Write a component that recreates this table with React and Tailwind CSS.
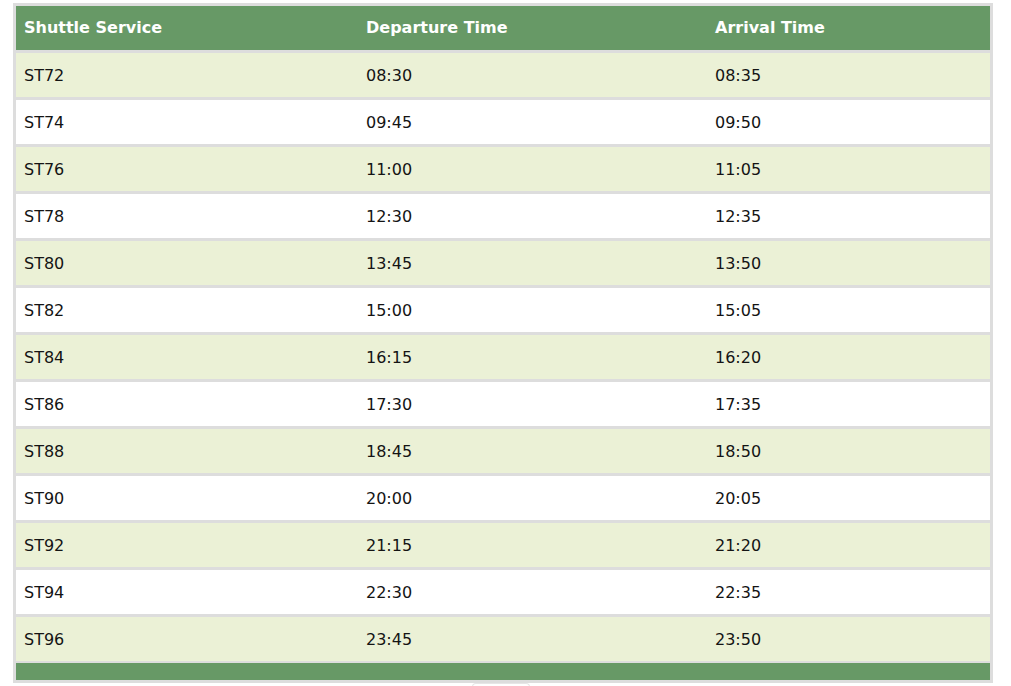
const rows = [
  ["ST72", "08:30", "08:35"],
  ["ST74", "09:45", "09:50"],
  ["ST76", "11:00", "11:05"],
  ["ST78", "12:30", "12:35"],
  ["ST80", "13:45", "13:50"],
  ["ST82", "15:00", "15:05"],
  ["ST84", "16:15", "16:20"],
  ["ST86", "17:30", "17:35"],
  ["ST88", "18:45", "18:50"],
  ["ST90", "20:00", "20:05"],
  ["ST92", "21:15", "21:20"],
  ["ST94", "22:30", "22:35"],
  ["ST96", "23:45", "23:50"],
];

export default function App() {
  return (
    <div className="min-h-[686px] w-[1011px] bg-white pt-[3px] pl-[13px] text-[16px] text-[#141414]" style={{ fontFamily: '"DejaVu Sans", Verdana, sans-serif' }}>
      <div className="w-[980px] border-[3px] border-[#dddddd] bg-[#dddddd]">
        <div className="grid h-[44px] grid-cols-[342px_349px_283px] items-center bg-[#679966] font-bold text-white">
          <div className="pl-[8px]">Shuttle Service</div>
          <div className="pl-[8px]">Departure Time</div>
          <div className="pl-[8px]">Arrival Time</div>
        </div>
        {rows.map((r, i) => (
          <div
            key={r[0]}
            className={`mt-[3px] grid h-[44px] grid-cols-[342px_349px_283px] items-center pt-[2px] ${i % 2 === 0 ? "bg-[#ebf1d6]" : "bg-white"}`}
          >
            <div className="pl-[8px]">{r[0]}</div>
            <div className="pl-[8px]">{r[1]}</div>
            <div className="pl-[8px]">{r[2]}</div>
          </div>
        ))}
        <div className="mt-[2px] h-[17px] bg-[#679966]"></div>
      </div>
      <div className="ml-[459px] h-[4px] w-[58px] rounded-t-[10px] border border-b-0 border-[#e6e6e6]"></div>
    </div>
  );
}
